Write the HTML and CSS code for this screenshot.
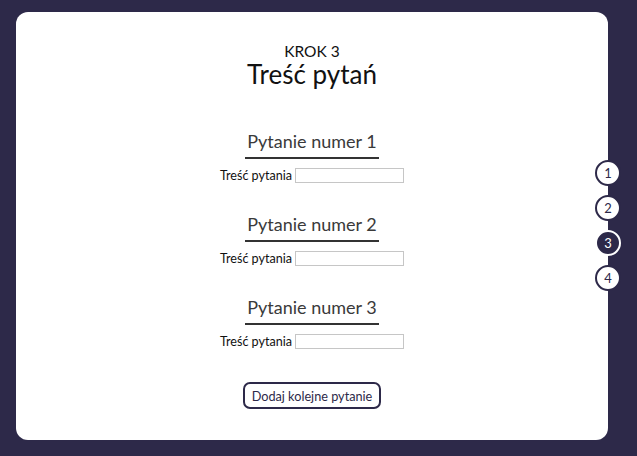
FILE: index.html
```html
<!DOCTYPE html>
<html lang="pl">
<head>
<meta charset="utf-8">
<title>Krok 3</title>
<link rel="stylesheet" href="styles.css">
</head>
<body>
<div class="page">
  <main class="card">
    <header class="header">
      <div class="step-label">KROK 3</div>
      <h1 class="title">Treść pytań</h1>
    </header>
    <section class="questions">
      <div class="question">
        <h2 class="q-title">Pytanie numer 1</h2>
        <label class="q-row"><span class="q-label">Treść pytania</span><input class="q-input" type="text"></label>
      </div>
      <div class="question">
        <h2 class="q-title">Pytanie numer 2</h2>
        <label class="q-row"><span class="q-label">Treść pytania</span><input class="q-input" type="text"></label>
      </div>
      <div class="question">
        <h2 class="q-title">Pytanie numer 3</h2>
        <label class="q-row"><span class="q-label">Treść pytania</span><input class="q-input" type="text"></label>
      </div>
    </section>
    <button class="add-btn" type="button">Dodaj kolejne pytanie</button>
    <nav class="steps">
      <span class="step">1</span>
      <span class="step">2</span>
      <span class="step active">3</span>
      <span class="step">4</span>
    </nav>
  </main>
</div>
</body>
</html>
```
FILE: styles.css
```css
* { box-sizing: border-box; }
html, body { margin: 0; padding: 0; }
body {
  background: #2d2949;
  font-family: Lato, "Open Sans", sans-serif;
  width: 637px;
  height: 456px;
  overflow: hidden;
}
.page {
  padding: 12px 0 0 16px;
}
.card {
  position: relative;
  width: 592px;
  height: 428px;
  background: #fff;
  border-radius: 12px;
  display: flex;
  flex-direction: column;
  align-items: center;
  padding-top: 30px;
}
.header {
  display: flex;
  flex-direction: column;
  align-items: center;
  color: #111;
}
.step-label {
  font-size: 15.5px;
  line-height: 18px;
}
.title {
  margin: 1px 0 0;
  font-size: 26px;
  font-weight: 400;
  line-height: 26px;
}
.questions {
  display: flex;
  flex-direction: column;
  align-items: center;
  margin-top: 43px;
  gap: 30px;
}
.question {
  display: flex;
  flex-direction: column;
  align-items: center;
}
.q-title {
  margin: 0;
  font-size: 18px;
  font-weight: 400;
  color: #3a3a3a;
  line-height: 22px;
  padding: 0 2px 5px;
  border-bottom: 2px solid #333;
}
.q-row {
  display: flex;
  align-items: center;
  gap: 3px;
  margin-top: 9px;
}
.q-label {
  font-size: 12.6px;
  color: #111;
}
.q-input {
  width: 109px;
  height: 15px;
  border: 1px solid #c6c6c6;
  padding: 0;
  margin: 0;
}
.add-btn {
  margin-top: 33px;
  font-family: Lato, "Open Sans", sans-serif;
  font-size: 12.7px;
  color: #2d2949;
  background: #fff;
  border: 2px solid #2d2949;
  border-radius: 7px;
  height: 27px;
  padding: 0 7px;
}
.steps {
  position: absolute;
  left: 579px;
  top: 148px;
  display: flex;
  flex-direction: column;
  gap: 9px;
}
.step {
  width: 26px;
  height: 26px;
  border-radius: 50%;
  background: #fff;
  border: 2px solid #2d2949;
  color: #2d2949;
  font-size: 13px;
  display: flex;
  align-items: center;
  justify-content: center;
}
.step.active {
  background: #2d2949;
  border-color: #fff;
  color: #fff;
}
```
